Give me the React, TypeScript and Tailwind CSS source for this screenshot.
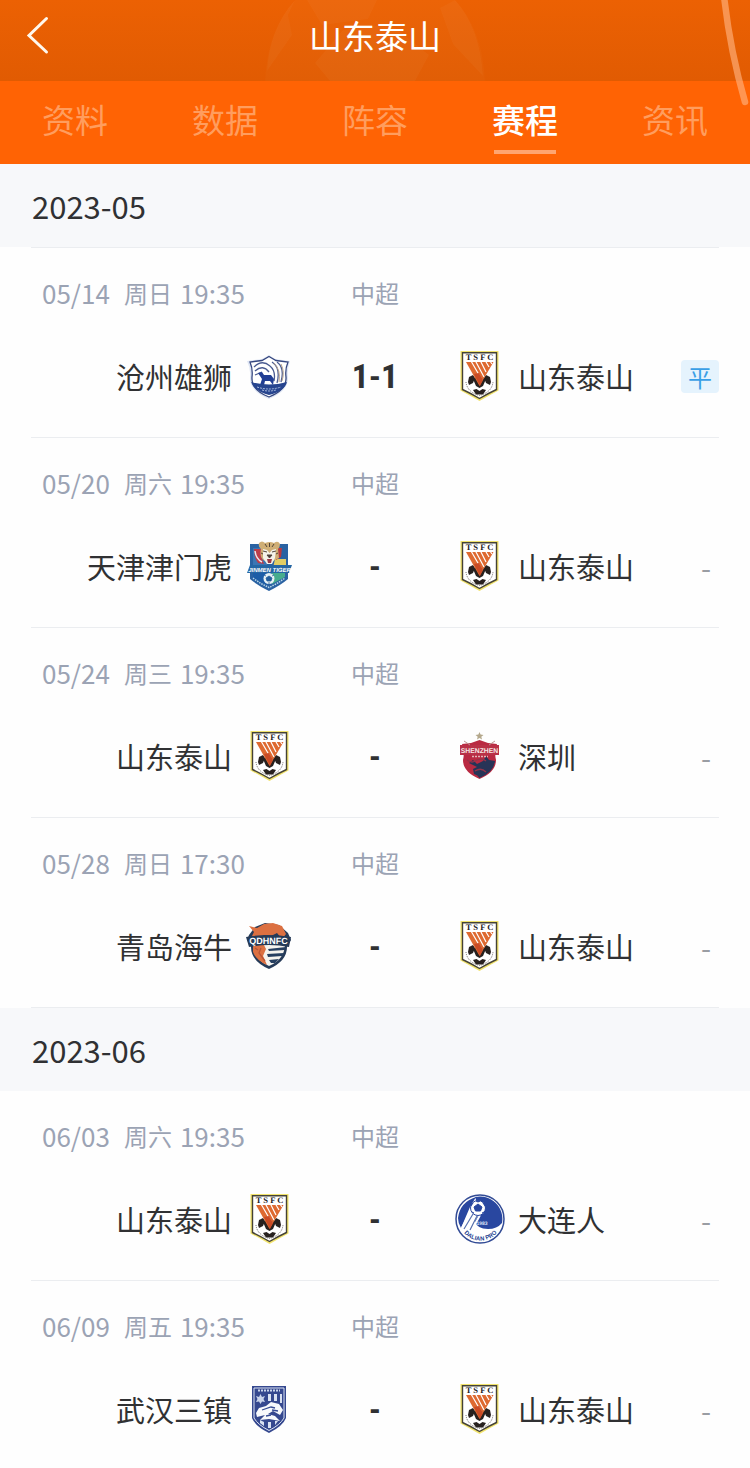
import type { ReactNode } from "react";

type Club = "cangzhou" | "taishan" | "tianjin" | "shenzhen" | "qingdao" | "dalian" | "wuhan";

interface Match {
  date: string;
  day: string;
  time: string;
  home: Club;
  away: Club;
  score?: string;
  result?: string;
}

interface Month {
  label: string;
  matches: Match[];
}

const tabs = ["资料", "数据", "阵容", "赛程", "资讯"];
const activeTab = "赛程";

const months: Month[] = [
  {
    label: "2023-05",
    matches: [
      { date: "05/14", day: "周日", time: "19:35", home: "cangzhou", away: "taishan", score: "1-1", result: "平" },
      { date: "05/20", day: "周六", time: "19:35", home: "tianjin", away: "taishan" },
      { date: "05/24", day: "周三", time: "19:35", home: "taishan", away: "shenzhen" },
      { date: "05/28", day: "周日", time: "17:30", home: "qingdao", away: "taishan" },
    ],
  },
  {
    label: "2023-06",
    matches: [
      { date: "06/03", day: "周六", time: "19:35", home: "taishan", away: "dalian" },
      { date: "06/09", day: "周五", time: "19:35", home: "wuhan", away: "taishan" },
    ],
  },
];

const clubs: Record<Club, { name: string; crest: ReactNode }> = {
  cangzhou: {
    name: "沧州雄狮",
    crest: (
      <>
        <path d="M24 4 30 8 45 10Q42 18 43 26 44 40 24 48 4 40 5 26 6 18 2 10L17 8Z" fill="#dfe6f4" />
        <path d="M24 5.500 31 9.500 43 11Q40 18 41 26 42 39 24 46 6 39 7 26 8 18 5 11L17 9.500Z" fill="#fff" stroke="#36477f" strokeWidth="1.300" />
        <path d="M9 16Q17 8 25 15 31 20 29 30M10 20Q18 13 24 21M10 24 17 21M27 11Q36 17 32 32M32 11Q40 17 36 31" fill="none" stroke="#4b5c91" strokeWidth="1.300" />
        <path d="M29 12Q36 19 34 31M36 13Q40 21 37 30" fill="none" stroke="#b9a48d" strokeWidth="1" />
        <path d="M13 22 17 21 19 24 26 24 29 28 28 34 25 30 20 30 19 34 15 34 17 28Z" fill="#213e94" />
        <path d="M6 31Q24 36 42 31 40 40 24 44 9 40 6 31Z" fill="#27458f" />
        <path d="M12 36Q24 40 36 36M17 39Q24 41 31 39" fill="none" stroke="#a9bbdf" strokeWidth="1" strokeDasharray="2 1" />
      </>
    ),
  },
  taishan: {
    name: "山东泰山",
    crest: (
      <>
        <path d="M5.500 0H43.500V39.500Q35 44 24.500 50 14 44 5.500 39.500Z" fill="#f1e36c" />
        <path d="M7.500 1.800H41.500V38.500Q34 42 24.500 47.500 15 42 7.500 38.500Z" fill="#fff" stroke="#454236" strokeWidth="1.400" />
        <text x="24.500" y="9" textAnchor="middle" fontFamily="Liberation Serif, serif" fontWeight="700" fontSize="8.500" fill="#25211f" textRendering="geometricPrecision">T S F C</text>
        <circle cx="24.500" cy="33" r="11" fill="#fff" />
        <path d="M13 31 14 26 18 24 20 27 18 32 14 34ZM36 31 35 26 31 24 29 27 31 32 35 34Z" fill="#27211f" />
        <path d="M18 28 21 26H28L31 28 28 35 24.500 37 21 35ZM18 39 21.500 38 24.500 40 27.500 38 31 39 28 43.500H21Z" fill="#27211f" />
        <path d="M11 31Q12 41 24.500 44.500 37 41 38 31" fill="none" stroke="#6b6661" strokeWidth="1" strokeDasharray="1 1" />
        <path d="M11 11H38.500L24.500 35Z" fill="#de6a31" />
        <path d="M16 10 27 29M20.500 10 29 26M25.500 10 31 21M30.500 10 34 16M35 10 37 13" stroke="#fff" strokeWidth="1.200" />
        <path d="M19 23 25 35 28 29 24 22Z" fill="#c94b25" />
      </>
    ),
  },
  tianjin: {
    name: "天津津门虎",
    crest: (
      <>
        <path d="M5 3H43V38Q36 44 24 50 12 44 5 38Z" fill="#2a62a2" />
        <path d="M8 7H22V27H8Z" fill="#3b76b4" />
        <path d="M9 8H18L16 15 19 23 13 22Q9 17 9 8Z" fill="#bd3d49" />
        <path d="M10 10Q11 18 17 21" fill="none" stroke="#e9e9ee" strokeWidth="1.500" />
        <path d="M30 18H41V27H28Z" fill="#e2cd64" />
        <path d="M31 7H37L36 16 31 19Z" fill="#b9393f" />
        <path d="M8 30H22V44L8 37Z" fill="#1c5da7" />
        <path d="M27 30H40V36L27 43Z" fill="#46ac8e" />
        <path d="M14 2Q17-1 20 2 25 0 29 2 33-1 35 3 35 6 33 8L34 17 28 20H20Q14 17 16 8 13 6 14 2Z" fill="#cfae75" />
        <path d="M18 8 22 9 24.500 12 27 9 31 8 30 17 27 23H22L18 17Z" fill="#f4f2e9" />
        <path d="M18 10 22 11M31 10 27 11M22 14H27L24.500 17ZM20 3 22 6M29 3 27 6M24.500 2V6M16 12 18 13M33 12 31 13" fill="#453c42" stroke="#534539" strokeWidth="1" />
        <path d="M22 18H27L26 22H23Z" fill="#9b3b46" />
        <path d="M5 24H47L44 32H2Z" fill="#2566a4" />
        <text x="24.500" y="30.500" textAnchor="middle" fontFamily="Liberation Sans, sans-serif" fontWeight="700" fontStyle="italic" fontSize="6" fill="#fff" textRendering="geometricPrecision">JINMEN TIGER</text>
        <circle cx="24" cy="37.500" r="5.500" fill="#e6f1f4" />
        <path d="M24 35 27 37 26 40H22L21 37ZM19 34 21 35M29 34 27 35M24 43V41" fill="#225d9b" stroke="#225d9b" strokeWidth=".8" />
        <path d="M8 37Q16 43 24 46.500 32 43 40 37" fill="none" stroke="#b9d7e9" strokeWidth="1.500" strokeDasharray="1.500 1" />
      </>
    ),
  },
  shenzhen: {
    name: "深圳",
    crest: (
      <>
        <path d="M24.500 1 25.600 3.600 28.500 4 26.300 5.800 27 8.500 24.500 7 22 8.500 22.700 5.800 20.500 4 23.400 3.600Z" fill="#b4a88c" />
        <path d="M7 13 16 12 24.500 9 33 12 42 13Q39 21 41 29 41 41 24.500 48 8 41 8 29 10 21 7 13Z" fill="#b92a42" />
        <path d="M14 32 18 29 22 33 28 30 31 25 34 29 40 30Q39 41 24.500 47 23 44 19 43L18 38 22 36Z" fill="#273457" />
        <path d="M12 29Q17 33 22 29 28 27 31 30M20 40Q26 36 31 41" fill="none" stroke="#93334a" strokeWidth="1.300" />
        <path d="M5 14H44V24H5Z" fill="#b93147" />
        <path d="M9 10 15 14M40 10 34 14" stroke="#b99590" strokeWidth="1" />
        <text x="24.500" y="21.500" textAnchor="middle" fontFamily="Liberation Sans, sans-serif" fontWeight="700" fontSize="6.800" fill="#f5e5e3" textRendering="geometricPrecision">SHENZHEN</text>
        <path d="M17 25.500H33" stroke="#e2b4b8" strokeWidth="1.500" strokeDasharray="2 1" />
      </>
    ),
  },
  qingdao: {
    name: "青岛海牛",
    crest: (
      <>
        <path d="M4 14 10 6 20 2 34 4 43 12 46 19 42 26Q42 40 24 48 6 40 6 26L2 19Z" fill="#263b58" />
        <path d="M8 20H40Q41 38 24 45 7 38 8 20Z" fill="#f5f3ee" />
        <path d="M9 11 4 5 12 7 19 3 28 2 37 5 41 13 37 18 32 12 26 15 19 14 11 18 7 15Z" fill="#dc7041" />
        <path d="M8 24 18 22 21 28 18 35 22 44Q11 39 8 31Z" fill="#dc7041" />
        <path d="M16 27 14 32 20 40M10 27 13 29" fill="none" stroke="#b95638" strokeWidth="1.300" />
        <path d="M23 28 41 26 40 29 24 30ZM22 33 39 32 37 35 23 36ZM24 39 34 38 30 42 26 42Z" fill="#263f60" />
        <path d="M1 16Q24 12 46 16L44 26Q24 22 4 26Z" fill="#263b58" />
        <text x="23.500" y="22.500" textAnchor="middle" fontFamily="Liberation Sans, sans-serif" fontWeight="700" fontSize="9" fill="#fff" textRendering="geometricPrecision">QDHNFC</text>
      </>
    ),
  },
  dalian: {
    name: "大连人",
    crest: (
      <>
        <circle cx="25" cy="25" r="24" fill="#fff" stroke="#324b95" strokeWidth="1.500" />
        <path d="M20 3A22.500 22.500 0 0 1 47 29Q42 35 33 35 22 35 20 27L25 18Z" fill="#2947a0" />
        <path d="M3 24Q5 8 21 3L15 13 6 34Q3 29 3 24Z" fill="#2947a0" />
        <path d="M17 15 7 34M20 20 11 36M25 21 17 36" stroke="#fff" strokeWidth="2" />
        <path d="M18 20 9 35M22 22 15 36" stroke="#5871ad" strokeWidth="1.200" />
        <circle cx="23" cy="14" r="7.500" fill="#fff" stroke="#2947a0" strokeWidth="1" />
        <path d="M23 10 27 13 25.500 17H20.500L19 13ZM16 12 18 9M30 12 28 9M17 18 19 19M29 18 27 19M21 7 23 8 25 7" fill="#2947a0" stroke="#2947a0" strokeWidth="1" />
        <text x="27" y="31" textAnchor="middle" fontFamily="Liberation Sans, sans-serif" fontSize="5" fontWeight="700" fill="#dce4f7" textRendering="geometricPrecision">1983</text>
        <path id="dalian-arc" d="M9 39A21.500 21.500 0 0 0 46 31" fill="none" />
        <text fontFamily="Liberation Sans, sans-serif" fontWeight="700" fontSize="6" fill="#243f91" textRendering="geometricPrecision">
          <textPath href="#dalian-arc">DALIAN PRO</textPath>
        </text>
      </>
    ),
  },
  wuhan: {
    name: "武汉三镇",
    crest: (
      <>
        <path d="M7 2H41V34Q38 42 24 49 10 42 7 34Z" fill="#35488f" />
        <path d="M9 4H39V34Q35 41 24 46.500 13 41 9 34Z" fill="none" stroke="#dce3f3" strokeWidth="1" />
        <path d="M13 6.500H35" stroke="#cbd6ec" strokeWidth="2" strokeDasharray="2 1" />
        <path d="M23 10H26V17H23ZM29 10H32V17H29ZM35 10H37V19H35ZM15 36 19 38V42L15 39ZM23 38H26V44H23ZM30 37H33L30 41Z" fill="#d9e1f1" />
        <path d="M15.500 10 17 13 20 12 18.500 15 20 18 17 17.500 15.500 20 14 17.500 11 18 12.500 15 11 12 14 13Z" fill="#c9d3ea" />
        <path d="M11 29 14 24 21 22 26 18 34 20 38 26 35 31 28 27 23 30 30 32 35 37 24 35 15 36 20 31 12 33Z" fill="#f7f9fc" />
        <path d="M17 26 26 23 30 24M27 26 33 27M21 32 26 31" fill="none" stroke="#364b94" strokeWidth="1.300" />
      </>
    ),
  },
};

function Crest({ club }: { club: Club }) {
  return (
    <svg viewBox="0 0 50 50" className="h-[50px] w-[50px] shrink-0" aria-hidden="true">
      {clubs[club].crest}
    </svg>
  );
}

function Header() {
  return (
    <header className="relative bg-[#ff6304] text-white">
      <div className="relative flex h-[81px] items-center justify-center overflow-hidden bg-linear-to-b from-[#ec6103] to-[#e15b02] pb-3">
        {/* Faded football behind the title */}
        <svg
          viewBox="0 0 220 81"
          className="absolute top-0 left-1/2 h-[81px] w-[220px] -translate-x-1/2"
          aria-hidden="true"
        >
          <path d="M0 81Q2 30 30 0H190Q218 30 220 81Z" fill="#fff" fillOpacity=".02" />
          <path d="M2 71 27 35 23 15 30 0Q4 30 2 71ZM42 0 57 25 103 19 112 0ZM50 63 65 81H150L164 55 125 24 78 30ZM175 8 188 44 218 76Q215 28 190 0Z" fill="#fff" fillOpacity=".03" />
        </svg>
        <button type="button" aria-label="返回" className="absolute top-3 left-5 flex h-12 w-10 items-center">
          <svg viewBox="0 0 40 48" className="h-12 w-10" aria-hidden="true">
            <path d="M26.500 6.500 9 23.500 26.500 40" fill="none" stroke="#fff8ee" strokeWidth="3" strokeLinecap="round" />
          </svg>
        </button>
        <h1 className="relative text-[33px] leading-10">山东泰山</h1>
      </div>

      <nav className="flex h-[83px]">
        {tabs.map((tab) => (
          <a
            key={tab}
            href="#"
            aria-current={tab === activeTab ? "page" : undefined}
            className={
              tab === activeTab
                ? "flex flex-1 flex-col items-center gap-2 pt-4 text-[33px] leading-[45px] font-medium text-white"
                : "flex flex-1 flex-col items-center gap-2 pt-4 text-[33px] leading-[45px] text-[#ff9d5e]"
            }
          >
            {tab}
            {tab === activeTab && <span className="h-1 w-[62px] bg-[#ffa570]" />}
          </a>
        ))}
      </nav>

      <svg
        viewBox="0 0 30 108"
        className="pointer-events-none absolute top-0 right-0 h-[108px] w-[30px]"
        aria-hidden="true"
      >
        <path d="M-1 -4Q5 50 20 102" transform="translate(5 0)" fill="none" stroke="#ffb17d" strokeOpacity=".65" strokeWidth="6.500" strokeLinecap="round" />
      </svg>
    </header>
  );
}

function MatchRow({ match }: { match: Match }) {
  return (
    <li className="border-b border-[#ebedf0] pt-[29px] pb-9">
      <div className="grid grid-cols-[1fr_160px_1fr] items-center text-[24px] leading-8 text-[#9ba3b4]">
        <p className="flex items-center pl-[11px]">
          <span className="text-[26px]">{match.date}</span>
          <span className="ml-3.5">{match.day}</span>
          <span className="ml-2 text-[26px]">{match.time}</span>
        </p>
        <p className="text-center">中超</p>
      </div>

      <div className="mt-[42px] grid grid-cols-[1fr_160px_1fr] items-center text-[29px] leading-[50px] text-[#303133]">
        <div className="flex items-center justify-end gap-[13px]">
          <span>{clubs[match.home].name}</span>
          <Crest club={match.home} />
        </div>
        <p className="text-center font-['Roboto_Condensed','Liberation_Sans_Narrow','Inter',sans-serif] text-[34px] font-bold">
          {match.score ?? "-"}
        </p>
        <div className="flex items-center gap-[13px]">
          <Crest club={match.away} />
          <span>{clubs[match.away].name}</span>
          {match.result ? (
            <span className="ml-auto rounded bg-[#e5f3fd] px-[7px] text-[24px] leading-[33px] text-[#3a9fe6]">
              {match.result}
            </span>
          ) : (
            <span className="ml-auto pr-2 text-[29px] text-[#9a9da3]">-</span>
          )}
        </div>
      </div>
    </li>
  );
}

export default function App() {
  return (
    <div className="min-h-screen bg-[#fefefe] font-['Noto_Sans_CJK_SC',sans-serif]">
      <Header />
      <main>
        {months.map((month) => (
          <section key={month.label} className="group">
            <h2 className="bg-[#f7f8fa] px-8 pt-[22px] pb-[21px] text-[31px] leading-10 text-[#303133]">
              {month.label}
            </h2>
            <ul className="px-[31px] group-first:before:block group-first:before:h-px group-first:before:bg-[#ebedf0] group-last:[&>li:last-child]:border-0 group-last:[&>li:last-child]:pb-8">
              {month.matches.map((match) => (
                <MatchRow key={match.date} match={match} />
              ))}
            </ul>
          </section>
        ))}
      </main>
    </div>
  );
}
